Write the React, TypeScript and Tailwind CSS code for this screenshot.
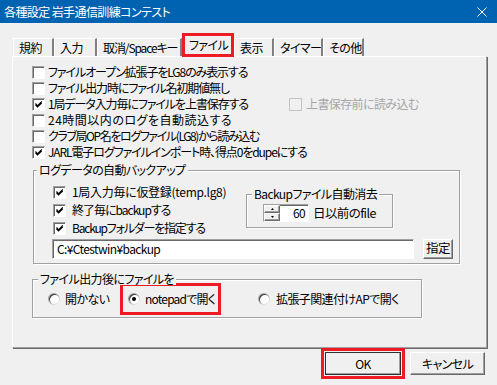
import React from "react";

const raised =
  "bg-[#f0f0f0] border border-t-white border-l-white border-r-[#696969] border-b-[#696969] shadow-[inset_-1px_-1px_0_#a0a0a0]";
const sunken =
  "border border-t-[#a0a0a0] border-l-[#a0a0a0] border-r-white border-b-white shadow-[inset_1px_1px_0_#696969]";
const etched = "border border-[#a0a0a0] shadow-[inset_1px_1px_0_#fff,1px_1px_0_#fff]";

function Check({ checked = false, disabled = false }: { checked?: boolean; disabled?: boolean }) {
  return (
    <span
      className={`shrink-0 w-[13px] h-[13px] flex items-center justify-center ${
        disabled ? "border border-[#c4c4c4] bg-[#f0f0f0]" : `${sunken} bg-white`
      }`}
    >
      {checked && (
        <svg width="9" height="9" viewBox="0 0 9 9">
          <path d="M1.5 3.5 L3.5 5.8 L7.8 1.5 M1.5 4.8 L3.5 7 L7.8 2.8" stroke="#000" strokeWidth="1.2" fill="none" />
        </svg>
      )}
    </span>
  );
}

function Radio({ checked = false }: { checked?: boolean }) {
  return (
    <span className="shrink-0 w-[12px] h-[12px] rounded-full bg-[linear-gradient(135deg,#808080,#ffffff)] p-[1px]">
      <span className="w-full h-full rounded-full bg-white flex items-center justify-center shadow-[inset_1px_1px_0_#404040]">
        {checked && <span className="w-[4px] h-[4px] rounded-full bg-black" />}
      </span>
    </span>
  );
}

function CheckRow({
  label,
  checked,
  className = "",
  tr = "",
}: {
  label: string;
  checked?: boolean;
  className?: string;
  tr?: string;
}) {
  return (
    <div className={`flex items-center gap-[3px] ${className}`}>
      <Check checked={checked} />
      <span className={tr}>{label}</span>
    </div>
  );
}

function Tab({ label, w, tr = "" }: { label: string; w: string; tr?: string }) {
  return (
    <div
      className={`${w} ${tr} h-[18px] pl-[5px] flex items-center border-t border-l border-white border-r-2 border-r-[#808080] overflow-hidden`}
    >
      {label}
    </div>
  );
}

export default function App() {
  return (
    <div className="w-[497px] h-[385px] overflow-hidden whitespace-nowrap bg-[#f0f0f0] text-[12px] leading-none text-black font-['Noto_Sans_CJK_JP','Noto_Sans',sans-serif] [font-feature-settings:'palt'] tracking-[-0.6px]">
      {/* title bar */}
      <div className="h-[23px] bg-[#0063b1] flex items-center justify-between pl-[4px] pr-[10px] text-white">
        <span className="text-[12px] tracking-[-0.6px]">各種設定 岩手通信訓練コンテスト</span>
        <svg width="10" height="10" viewBox="0 0 10 10">
          <path d="M0.5 0.5 L9.5 9.5 M9.5 0.5 L0.5 9.5" stroke="#fff" strokeWidth="1" />
        </svg>
      </div>

      <div className="pl-[12px] pt-[10px]">
        {/* tabs */}
        <div className="flex items-end h-[23px] pl-[1px] relative z-10">
          <Tab label="規約" w="w-[41px]" />
          <Tab label="入力" w="w-[43px]" />
          <Tab label="取消/Spaceキー" w="w-[85px]" tr="tracking-[-1.1px]" />
          <div className="w-[52px] h-[24px] -mb-[1px] border-[3px] border-[#ed1c24] flex items-center pl-[4px] bg-[#f0f0f0]">
            ファイル
          </div>
          <Tab label="表示" w="w-[40px]" />
          <Tab label="タイマー" w="w-[49px]" />
          <Tab label="その他" w="w-[41px]" />
        </div>

        {/* panel */}
        <div className="w-[475px] h-[292px] border border-t-white border-l-white border-r-[#a0a0a0] border-b-[#a0a0a0] shadow-[1px_1px_0_#696969]">
          <div className="pl-[19px] pt-[7px]">
            <CheckRow className="h-[16px]" tr="tracking-[-1.1px]" label="ファイルオープン拡張子をLG8のみ表示する" />
            <CheckRow className="h-[16px]" tr="tracking-[-1.1px]" label="ファイル出力時にファイル名初期値無し" />
            <div className="h-[16px] flex items-center">
              <CheckRow className="w-[257px]" tr="tracking-[-1.1px]" checked label="1局データ入力毎にファイルを上書保存する" />
              <div className="flex items-center gap-[4px] text-[#a6a6a6]">
                <Check disabled />
                <span>上書保存前に読み込む</span>
              </div>
            </div>
            <CheckRow className="h-[16px]" tr="tracking-[0.5px]" label="24時間以内のログを自動読込する" />
            <CheckRow className="h-[16px]" tr="tracking-[-1.4px]" label="クラブ局OP名をログファイル(LG8)から読み込む" />
            <CheckRow className="h-[16px]" tr="tracking-[-1.1px]" checked label="JARL電子ログファイルインポート時、得点0をdupeにする" />

            {/* backup group */}
            <div className={`relative ml-[1px] mt-[10px] w-[427px] h-[94px] ${etched}`}>
              <span className="absolute -top-[7px] left-[3px] px-[2px] bg-[#f0f0f0]">ログデータの自動バックアップ</span>
              <div className="flex pl-[19px] pt-[12px]">
                <div className="w-[193px]">
                  <CheckRow className="h-[18px] gap-[6px]" tr="tracking-[-0.3px]" checked label="1局入力毎に仮登録(temp.lg8)" />
                  <CheckRow className="h-[18px] gap-[6px]" tr="tracking-[-1px]" checked label="終了毎にbackupする" />
                  <CheckRow className="h-[18px] gap-[6px]" tr="tracking-[-1.2px]" checked label="Backupフォルダーを指定する" />
                </div>
                <div className={`relative mt-[11px] w-[147px] h-[34px] ${etched}`}>
                  <span className="absolute -top-[7px] left-[5px] px-[2px] bg-[#f0f0f0]">Backupファイル自動消去</span>
                  <div className="flex items-center pl-[16px] pt-[9px] gap-[4px]">
                    <div className={`flex w-[46px] h-[18px] bg-white ${sunken}`}>
                      <div className="w-[16px] flex flex-col">
                        <div className={`flex-1 flex items-center justify-center ${raised}`}>
                          <svg width="3" height="2" viewBox="0 0 3 2">
                            <path d="M1.5 0 L3 2 L0 2Z" fill="#000" />
                          </svg>
                        </div>
                        <div className={`flex-1 flex items-center justify-center ${raised}`}>
                          <svg width="3" height="2" viewBox="0 0 3 2">
                            <path d="M0 0 L3 0 L1.5 2Z" fill="#000" />
                          </svg>
                        </div>
                      </div>
                      <div className="flex-1 flex items-center justify-end pr-[3px]">60</div>
                    </div>
                    <span className="text-[12.5px]">日以前のfile</span>
                  </div>
                </div>
              </div>
              <div className="flex items-center pl-[18px] pt-[2px]">
                <div className={`w-[362px] h-[20px] bg-white flex items-center pl-[4px] ${sunken}`}>
                  C:¥Ctestwin¥backup
                </div>
                <button className={`ml-[9px] w-[30px] h-[20px] pb-[1px] flex items-center justify-center text-[12.5px] ${raised}`}>
                  指定
                </button>
              </div>
            </div>

            {/* output group */}
            <div className={`relative mt-[15px] w-[390px] h-[39px] ${etched}`}>
              <span className="absolute -top-[7px] left-[5px] px-[2px] bg-[#f0f0f0]">ファイル出力後にファイルを</span>
              <div className="flex items-center pt-[3px]">
                <div className="w-[87px] pl-[15px] flex items-center gap-[5px]">
                  <Radio />
                  <span>開かない</span>
                </div>
                <div className="w-[101px] h-[32px] border-[3px] border-[#ed1c24] flex items-center pl-[5px] gap-[5px]">
                  <Radio checked />
                  <span className="tracking-[-0.8px]">notepadで開く</span>
                </div>
                <div className="ml-[37px] flex items-center gap-[6px]">
                  <Radio />
                  <span>拡張子関連付けAPで開く</span>
                </div>
              </div>
            </div>
          </div>
        </div>

        {/* buttons */}
        <div className="flex justify-end items-start gap-[5px] pr-[12px]">
          <div className="border-[3px] border-[#ed1c24] p-[1px]">
            <button className={`w-[76px] h-[23px] flex items-center justify-center outline outline-1 outline-[#303030] -outline-offset-1 ${raised}`}>
              OK
            </button>
          </div>
          <button className={`mt-[4px] w-[75px] h-[23px] flex items-center justify-center ${raised}`}>キャンセル</button>
        </div>
      </div>
    </div>
  );
}
